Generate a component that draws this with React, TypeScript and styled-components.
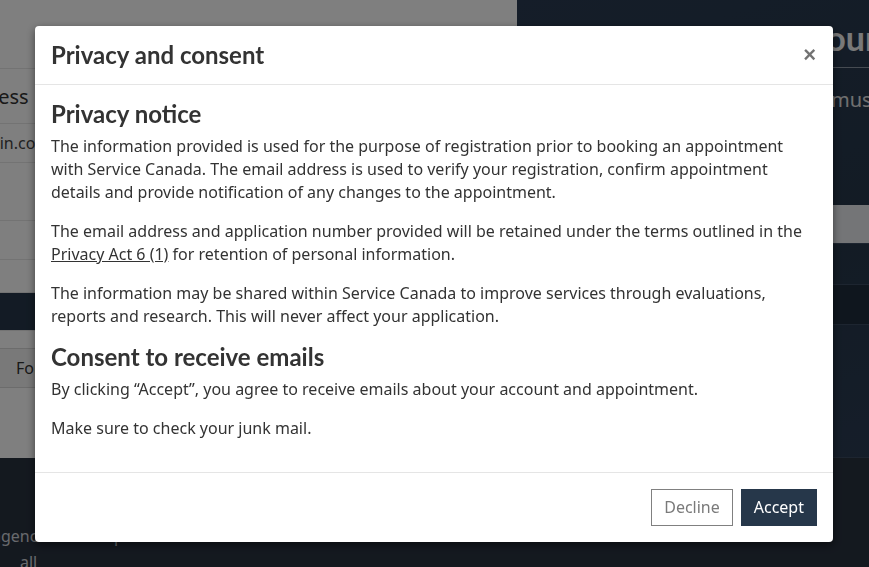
import React from 'react';
import styled, { createGlobalStyle } from 'styled-components';

const GlobalStyle = createGlobalStyle`
  html, body {
    margin: 0;
    padding: 0;
    background: #ffffff;
    font-family: 'Noto Sans', 'Open Sans', sans-serif;
    overflow: hidden;
  }
  * { box-sizing: border-box; }
`;

const Page = styled.div`
  width: 869px;
  height: 567px;
  display: flex;
  flex-direction: column;
`;

const Main = styled.div`
  display: flex;
  height: 458px;
`;

const FormCol = styled.div`
  width: 517px;
  flex-shrink: 0;
  background: #ffffff;
  display: flex;
  flex-direction: column;
  padding-top: 68px;
`;

const Field = styled.div<{ h: number; dark?: boolean; top?: boolean }>`
  height: ${({ h }) => h}px;
  border-top: 1px solid #e6e6e6;
  background: ${({ dark }) => (dark ? '#26374a' : 'transparent')};
  display: flex;
  align-items: ${({ top }) => (top ? 'flex-start' : 'center')};
  font-size: 20px;
  color: #333;
`;

const FieldLabel = styled.span`
  margin-left: -102px;
  font-size: 20px;
`;

const FieldValue = styled.span`
  margin-left: -101px;
  font-size: 16px;
  color: #444;
`;

const GhostBtn = styled.div`
  margin: 17px 0 0 -10px;
  height: 40px;
  border: 1px solid #d8d8d8;
  background: #f3f3f3;
  color: #333;
  font-size: 16px;
  display: flex;
  align-items: center;
  padding: 0 14px 0 25px;
`;

const Hero = styled.div`
  flex: 1;
  background: linear-gradient(160deg, #2a3b52 0%, #26374a 60%, #2b3c54 100%);
  display: flex;
  flex-direction: column;
  color: #f2f2f2;
  padding-left: 254px;
`;

const HeroTitle = styled.div`
  height: 68px;
  border-bottom: 1px solid #8d97a5;
  font-family: 'Lato', sans-serif;
  font-weight: 700;
  font-size: 34px;
  display: flex;
  align-items: center;
  padding-top: 8px;
  white-space: nowrap;
`;

const HeroText = styled.div`
  font-size: 20px;
  padding: 18px 0 0 20px;
  height: 137px;
  color: #e0e0e0;
  white-space: nowrap;
`;

const HeroBand = styled.div<{ tone: string; h: number }>`
  height: ${({ h }) => h}px;
  margin-left: -254px;
  background: ${({ tone }) => tone};
  border-bottom: 1px solid #3a4a60;
`;

const Footer = styled.div`
  flex: 1;
  background: #29323f;
  color: #d0d4da;
  font-size: 16px;
  padding: 65px 0 0 0;
  line-height: 26px;
`;

const FooterLine = styled.div<{ indent: number }>`
  margin-left: ${({ indent }) => indent}px;
  white-space: nowrap;
`;

const Overlay = styled.div`
  position: fixed;
  inset: 0;
  background: rgba(0, 0, 0, 0.5);
  padding: 26px 0 0 35px;
`;

const Modal = styled.div`
  width: 798px;
  background: #ffffff;
  border-radius: 4px;
  box-shadow: 0 3px 9px rgba(0, 0, 0, 0.5);
  color: #333333;
`;

const Header = styled.div`
  display: flex;
  align-items: center;
  justify-content: space-between;
  padding: 16px;
  border-bottom: 1px solid #e5e5e5;
`;

const Title = styled.h2`
  margin: 0;
  font-family: 'Lato', sans-serif;
  font-weight: 700;
  font-size: 24px;
  line-height: 26px;
  color: #333333;
`;

const Close = styled.button`
  border: 0;
  background: none;
  padding: 0;
  margin-right: 1px;
  font-family: 'Liberation Sans', sans-serif;
  font-weight: 700;
  font-size: 22px;
  line-height: 1;
  color: #000;
  opacity: 0.55;
  cursor: pointer;
`;

const Body = styled.div`
  padding: 16px;
`;

const Heading = styled.h3`
  margin: 0 0 8px 0;
  font-family: 'Lato', sans-serif;
  font-weight: 700;
  font-size: 24px;
  line-height: 26px;
  color: #333333;
`;

const Para = styled.p`
  margin: 0 0 16px 0;
  font-size: 16px;
  line-height: 23px;
  color: #333333;
`;

const Link = styled.a`
  color: #333333;
  text-decoration: underline;
`;

const Actions = styled.div`
  display: flex;
  justify-content: flex-end;
  gap: 8px;
  padding: 16px;
  border-top: 1px solid #e5e5e5;
`;

const Btn = styled.button<{ primary?: boolean }>`
  font-family: 'Noto Sans', sans-serif;
  font-size: 16px;
  line-height: 23px;
  height: 37px;
  padding: 6px 12px;
  border: 1px solid ${({ primary }) => (primary ? '#26374a' : '#808080')};
  background: ${({ primary }) => (primary ? '#26374a' : '#ffffff')};
  color: ${({ primary }) => (primary ? '#ffffff' : '#7a7a7a')};
  border-radius: 0;
  cursor: pointer;
`;

export default function App() {
  return (
    <>
      <GlobalStyle />
      <Page>
        <Main>
          <FormCol>
            <Field h={55}>
              <FieldLabel>Email address</FieldLabel>
            </Field>
            <Field h={39}>
              <FieldValue>name@domain.com</FieldValue>
            </Field>
            <Field h={58} />
            <Field h={39} />
            <Field h={33} />
            <Field h={38} dark />
            <Field h={128} top>
              <GhostBtn>Forgot</GhostBtn>
            </Field>
          </FormCol>
          <Hero>
            <HeroTitle>Account</HeroTitle>
            <HeroText>You must</HeroText>
            <HeroBand tone="#e8ebef" h={39} />
            <HeroBand tone="transparent" h={41} />
            <HeroBand tone="#1f2d3d" h={40} />
            <HeroBand tone="transparent" h={133} />
          </Hero>
        </Main>
        <Footer>
          <FooterLine indent={-8}>agencies and departments</FooterLine>
          <FooterLine indent={20}>all</FooterLine>
        </Footer>
      </Page>

      <Overlay>
        <Modal role="dialog" aria-labelledby="privacy-title">
          <Header>
            <Title id="privacy-title">Privacy and consent</Title>
            <Close aria-label="Close">×</Close>
          </Header>
          <Body>
            <Heading>Privacy notice</Heading>
            <Para>
              The information provided is used for the purpose of registration prior to booking an appointment
              with Service Canada. The email address is used to verify your registration, confirm appointment
              details and provide notification of any changes to the appointment.
            </Para>
            <Para>
              The email address and application number provided will be retained under the terms outlined in the{' '}
              <Link href="#">Privacy Act 6 (1)</Link> for retention of personal information.
            </Para>
            <Para>
              The information may be shared within Service Canada to improve services through evaluations,
              reports and research. This will never affect your application.
            </Para>
            <Heading>Consent to receive emails</Heading>
            <Para>By clicking “Accept”, you agree to receive emails about your account and appointment.</Para>
            <Para>Make sure to check your junk mail.</Para>
          </Body>
          <Actions>
            <Btn>Decline</Btn>
            <Btn primary>Accept</Btn>
          </Actions>
        </Modal>
      </Overlay>
    </>
  );
}
